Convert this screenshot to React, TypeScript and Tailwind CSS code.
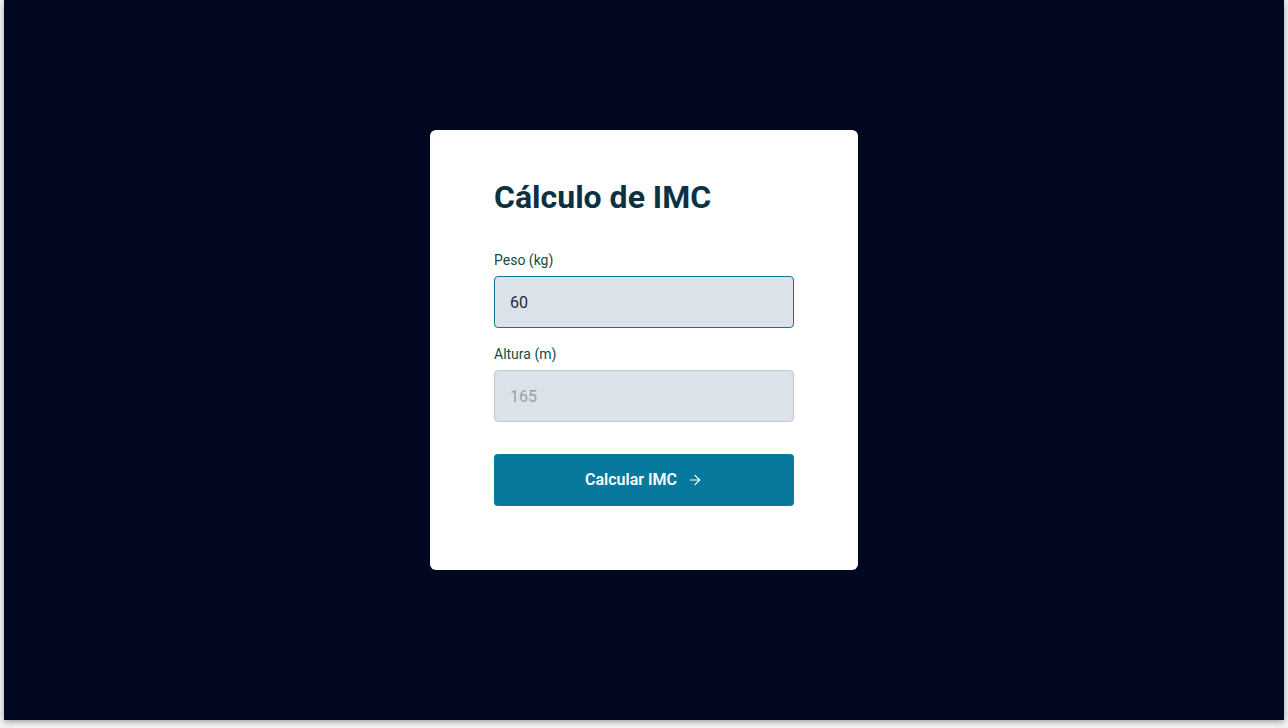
import { ArrowRight } from 'lucide-react';

export default function App() {
  return (
    <div className="min-h-screen bg-[#f4f4f5] pl-1 pr-1 pb-2" style={{ fontFamily: 'Roboto, "Liberation Sans", sans-serif' }}>
      <div className="h-[720px] bg-[#030821] shadow-[0_2px_6px_rgba(0,0,0,0.35)] flex items-center justify-center pb-[20px]">
        <form className="w-[428px] bg-white rounded-md px-16 pt-12 pb-16 flex flex-col" onSubmit={(e) => e.preventDefault()}>
          {/* Title */}
          <h1 className="text-[32px] leading-9 font-bold text-[#0b3142] mb-[35px] mt-[1px]">Cálculo de IMC</h1>

          {/* Peso */}
          <label className="text-sm leading-5 text-[#0f4f3e] mb-1.5">Peso (kg)</label>
          <input
            defaultValue="60"
            className="h-[52px] w-full rounded bg-[#dce2ea] border border-[#0e7490] px-[15px] text-base text-[#1f2937] outline-none"
          />

          {/* Altura */}
          <label className="text-sm leading-5 text-[#0f4f3e] mt-4 mb-1.5">Altura (m)</label>
          <input
            placeholder="165"
            className="h-[52px] w-full rounded bg-[#dce2ea] border border-[#c2c7cf] px-[15px] text-base text-[#1f2937] placeholder:text-[#9aa0a8] outline-none"
          />

          {/* Submit */}
          <button
            type="submit"
            className="mt-8 h-[52px] w-full rounded bg-[#06799c] text-white text-base font-semibold flex items-center justify-center gap-2.5"
          >
            Calcular IMC
            <ArrowRight className="w-4 h-4" strokeWidth={1.75} />
          </button>
        </form>
      </div>
    </div>
  );
}
